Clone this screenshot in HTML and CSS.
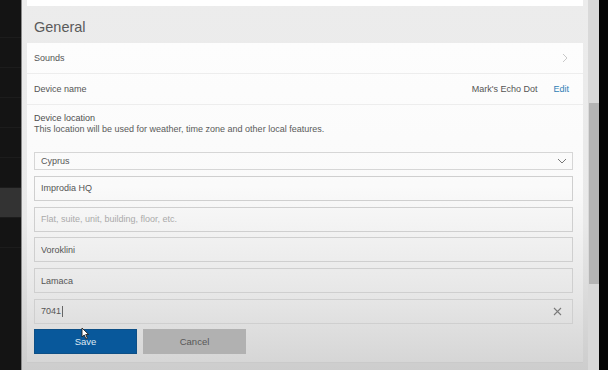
FILE: index.html
```html
<!DOCTYPE html>
<html lang="en">
<head>
    <meta charset="UTF-8">
    <meta name="viewport" content="width=device-width, initial-scale=1.0">
    <title>Device Settings</title>
    <link rel="stylesheet" href="styles.css">
</head>
<body>

    <div class="side">
        <div class="side-item"></div>
        <div class="side-item"></div>
        <div class="side-item"></div>
        <div class="side-item"></div>
        <div class="side-item"></div>
        <div class="side-item"></div>
        <div class="side-item active"></div>
        <div class="side-item"></div>
    </div>

    <div class="panel">
        <div class="top-card"></div>

        <h2 class="section-title">General</h2>

        <div class="list">
            <div class="row">
                <span>Sounds</span>
                <svg class="chevron" width="6" height="10" viewBox="0 0 6 10">
                    <polyline points="1,1 5,5 1,9" fill="none" stroke="#c8c8c8" stroke-width="1"/>
                </svg>
            </div>
            <div class="row">
                <span>Device name</span>
                <span class="device-value">Mark's Echo Dot</span>
                <a href="#" class="edit-link">Edit</a>
            </div>

            <div class="location">
                <div class="location-title">Device location</div>
                <div class="location-desc">This location will be used for weather, time zone and other local features.</div>

                <form class="location-form">
                    <div class="field select">
                        <span>Cyprus</span>
                        <svg width="10" height="6" viewBox="0 0 10 6">
                            <polyline points="1,1 5,5 9,1" fill="none" stroke="#777" stroke-width="1"/>
                        </svg>
                    </div>
                    <input class="field" type="text" value="Improdia HQ">
                    <input class="field" type="text" placeholder="Flat, suite, unit, building, floor, etc.">
                    <input class="field" type="text" value="Voroklini">
                    <input class="field" type="text" value="Lamaca">
                    <div class="field">
                        <span>7041</span><span class="caret"></span>
                        <svg class="clear" width="9" height="9" viewBox="0 0 9 9">
                            <path d="M1 1L8 8M8 1L1 8" stroke="#7a7a7a" stroke-width="1.1"/>
                        </svg>
                    </div>

                    <div class="buttons">
                        <button type="button" class="save">Save</button>
                        <button type="button" class="cancel">Cancel</button>
                    </div>
                    <svg class="pointer" width="9" height="13" viewBox="0 0 9 13">
                        <path d="M1 1L1 10L3.2 8L5 12L6.4 11.3L4.7 7.5L7.6 7.5Z" fill="#fff" stroke="#222" stroke-width="0.9"/>
                    </svg>
                </form>
            </div>
        </div>
    </div>

    <div class="scrollbar">
        <div class="thumb"></div>
    </div>
    <div class="edge"></div>

</body>
</html>
```

FILE: styles.css
```css
html, body {
    margin: 0;
    height: 370px;
    overflow: hidden;
}
body {
    display: flex;
    background-color: #0c0c0c;
    font-family: "Liberation Sans", Arial, sans-serif;
    color: #555;
}
.side {
    width: 21px;
    background-color: #141414;
    padding-top: 8px;
}
.side-item {
    height: 29px;
    border-bottom: 1px solid #1c1c1c;
}
.side-item.active {
    background-color: #333;
}
.panel {
    width: 556px;
    border-left: 1px solid #8a8a8a;
    padding: 0 5px;
    background: linear-gradient(to bottom, #ececec 0%, #e9e9e9 60%, #cdcdcd 100%);
}
.top-card {
    height: 6px;
    background-color: #fff;
}
.section-title {
    margin: 0;
    height: 37px;
    line-height: 43px;
    padding-left: 7px;
    font-size: 14.5px;
    font-weight: normal;
    color: #5a5a5a;
}
.list {
    height: 319px;
    background: linear-gradient(to bottom, #fdfdfd 0%, #fafafa 45%, #e6e6e6 80%, #d6d6d6 100%);
    border-bottom: 1px solid #cacaca;
}
.row {
    display: flex;
    align-items: center;
    height: 30px;
    padding: 0 14px 0 7px;
    border-bottom: 1px solid #ededed;
    font-size: 9px;
    color: #555;
}
.chevron {
    margin-left: auto;
    margin-right: 1px;
}
.device-value {
    margin-left: auto;
    color: #555;
}
.edit-link {
    margin-left: 16px;
    color: #2f7fb5;
    text-decoration: none;
}
.location {
    padding: 8px 10px 0 7px;
    font-size: 9px;
}
.location-title {
    line-height: 11px;
    color: #4e4e4e;
}
.location-desc {
    line-height: 11px;
    color: #5a5a5a;
}
.location-form {
    position: relative;
    display: flex;
    flex-direction: column;
    gap: 5.75px;
    margin-top: 17px;
}
.field {
    display: flex;
    align-items: center;
    box-sizing: border-box;
    width: 100%;
    height: 25px;
    margin: 0;
    padding: 0 8px 0 6px;
    border: 1px solid #cfcfcf;
    border-radius: 0;
    background: transparent;
    font-family: inherit;
    font-size: 9px;
    color: #555;
    outline: none;
}
.field::placeholder {
    color: #aaa;
}
.field.select {
    height: 18px;
    justify-content: space-between;
    padding-right: 5px;
    border-color: #d6d6d6;
}
.caret {
    width: 1px;
    height: 11px;
    margin-left: 1px;
    background-color: #666;
}
.clear {
    margin-left: auto;
    margin-right: 2px;
}
.buttons {
    display: flex;
    gap: 6px;
    margin-top: -1px;
}
.buttons button {
    width: 103px;
    height: 25px;
    border: none;
    border-radius: 0;
    font-family: inherit;
    font-size: 9.5px;
    cursor: pointer;
}
.save {
    background-color: #08589b;
    color: #dde8f3;
    border: 1px solid #0d4f86 !important;
}
.cancel {
    background-color: #b1b1b1;
    color: #575757;
}
.pointer {
    position: absolute;
    left: 47px;
    bottom: 14px;
}
.scrollbar {
    width: 11px;
    background-color: #d9d9d9;
}
.thumb {
    height: 181px;
    margin-top: 103px;
    margin-left: 1px;
    background-color: #b4b4b4;
}
.edge {
    flex: 1;
    background-color: #050505;
}
```
